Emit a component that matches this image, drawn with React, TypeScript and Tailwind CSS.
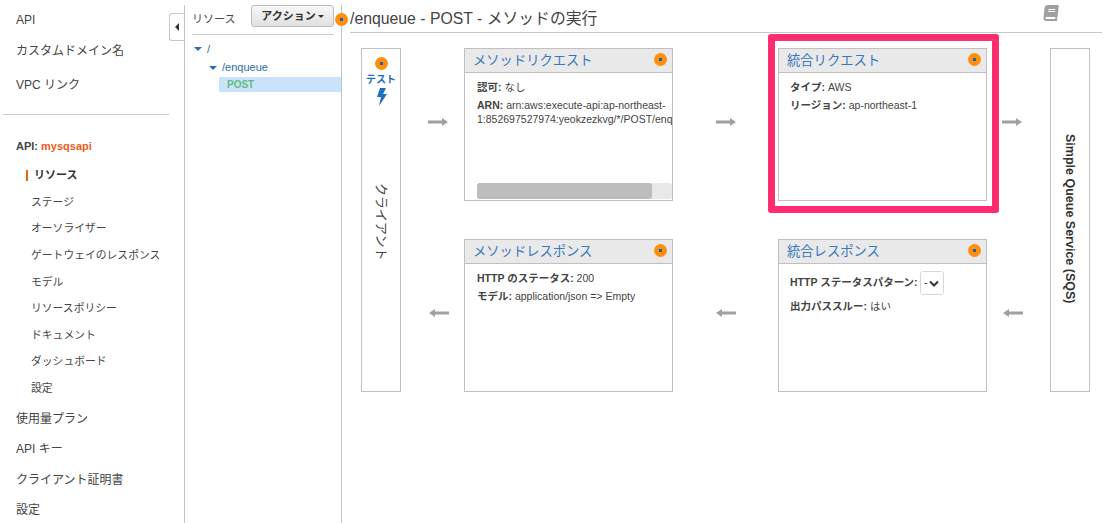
import { FaBook } from "react-icons/fa";

const font = "font-['Liberation_Sans','Noto_Sans_CJK_JP',sans-serif]";

function Dot({ className = "" }: { className?: string }) {
  return (
    <span className={`flex h-[13px] w-[13px] shrink-0 items-center justify-center rounded-full bg-[#ff8f0f] ${className}`}>
      <span className="h-[3px] w-[3px] bg-[#1d5fb0]" />
    </span>
  );
}

function Caret() {
  return <span className="h-0 w-0 border-x-[4px] border-t-[4px] border-x-transparent border-t-[#2a6ebb]" />;
}

function Arrow({ left = false }: { left?: boolean }) {
  return (
    <svg width="20" height="10" viewBox="0 0 20 10" className={left ? "rotate-180" : ""}>
      <path d="M0 3.5h14V1l6 4-6 4V6.5H0z" fill="#a0a0a0" />
    </svg>
  );
}

function Card({ title, children, className = "" }: { title: string; children?: React.ReactNode; className?: string }) {
  return (
    <div className={`relative flex h-[153px] w-[209px] flex-col border border-[#c0c0c0] bg-white ${className}`}>
      <div className="flex h-[24px] shrink-0 items-center justify-between border-b border-[#c0c0c0] bg-[#e9e9e9] pl-[8px] pr-[5px]">
        <span className="text-[13.3px] text-[#3a78bd]">{title}</span>
        <Dot className="mb-[2px]" />
      </div>
      {children}
    </div>
  );
}

const topItems = [
  { label: "API", cls: "h-[30px]" },
  { label: "カスタムドメイン名", cls: "h-[30px] mt-[1px]" },
  { label: "VPC リンク", cls: "h-[30px] mt-[4px]" },
];
const apiItems = ["ステージ", "オーソライザー", "ゲートウェイのレスポンス", "モデル", "リソースポリシー", "ドキュメント", "ダッシュボード", "設定"];
const bottomItems = ["使用量プラン", "API キー", "クライアント証明書", "設定"];

export default function App() {
  return (
    <div className={`flex h-[523px] w-[1106px] overflow-hidden bg-white pt-[5px] text-[#444] ${font}`}>
      {/* left nav */}
      <div className="relative w-[185px] shrink-0 border-r border-[#c4c4c4]">
        {topItems.map((i) => (
          <div key={i.label} className={`flex items-center pl-[16px] text-[12px] text-[#444] ${i.cls}`}>{i.label}</div>
        ))}
        <div className="ml-[3px] mt-[14px] w-[166px] border-t border-[#c8c8c8]" />
        <div className="mt-[23px] flex h-[16px] items-center pl-[16px] text-[11px] font-bold">
          API:&nbsp;<span className="text-[#ec5c1c]">mysqsapi</span>
        </div>
        <div className="mt-[8px] flex h-[26.6px] items-center pl-[26px] text-[11px] font-bold text-[#333]">
          <span className="mr-[6px] h-[11px] w-[2px] bg-[#dd6b10]" />リソース
        </div>
        {apiItems.map((i) => (
          <div key={i} className="flex h-[26.6px] items-center pl-[31px] text-[10.8px]">{i}</div>
        ))}
        <div className="mt-[2px]">
          {bottomItems.map((i) => (
            <div key={i} className="flex h-[30.5px] items-center pl-[16px] text-[12px]">{i}</div>
          ))}
        </div>
        {/* collapse tab */}
        <div className="absolute right-0 top-[8px] flex h-[28px] w-[15px] items-center justify-center rounded-l-[3px] border border-r-0 border-[#c8c8c8] bg-white">
          <span className="h-0 w-0 border-y-[4px] border-r-[4px] border-y-transparent border-r-[#333]" />
        </div>
      </div>

      {/* resources panel */}
      <div className="relative w-[157px] shrink-0 border-r border-[#c4c4c4]">
        <div className="ml-[7px] mr-[7px] flex h-[30px] items-start justify-between border-b border-[#c8c8c8]">
          <span className="mt-[6px] text-[11px] text-[#444]">リソース</span>
          <button className="flex h-[22px] w-[83px] items-center justify-center gap-[2px] rounded-[3px] border border-[#bdbdbd] bg-linear-to-b from-[#f8f8f8] to-[#e0e0e0] text-[11px] font-bold text-[#333]">
            アクション
            <span className="h-0 w-0 border-x-[3px] border-t-[3px] border-x-transparent border-t-[#333]" />
          </button>
        </div>
        <div className="mt-[5px] text-[11px] text-[#2f6aa8]">
          <div className="flex h-[18px] items-center gap-[5px] pl-[9px]"><Caret /><span>/</span></div>
          <div className="flex h-[19px] items-center gap-[5px] pl-[24px]"><Caret /><span>/enqueue</span></div>
          <div className="ml-[34px] flex h-[15px] items-center bg-[#c9e3fb] pl-[8px] text-[10px] font-bold text-[#67bb7c]">POST</div>
        </div>
        <Dot className="absolute right-[-7px] top-[8px]" />
      </div>

      {/* method execution */}
      <div className="min-w-0 flex-1 pl-[8px] pr-[4px]">
        <div className="flex h-[28px] items-center justify-between border-b border-[#c8c8c8]">
          <span className="text-[15.8px] text-[#444]">/enqueue - POST - メソッドの実行</span>
          <FaBook className="mb-[11px] mr-[43px] h-[16px] w-[16px] -skew-x-6 text-[#a0a0a0]" />
        </div>

        <div className="ml-[11px] mt-[15px] grid grid-cols-[40px_63px_209px_105px_209px_63px_40px] grid-rows-[153px_38px_153px]">
          <div className="row-span-3 flex flex-col items-center border border-[#c0c0c0] pt-[8px]">
            <Dot />
            <span className="mt-[3px] text-[10px] font-bold leading-[14px] text-[#1f6fc0]">テスト</span>
            <svg width="11" height="18" viewBox="0 0 11 18" className="mt-[1px]">
              <path d="M4 0h6L7 6h4L3 18l2-9H1z" fill="#1f6fc0" />
            </svg>
            <div className="mt-[77px] text-[13px] text-[#444] [writing-mode:vertical-rl] [text-orientation:sideways]">クライアント</div>
          </div>

          <div className="flex items-center justify-center pb-[6px] pl-[11px]"><Arrow /></div>
          <Card title="メソッドリクエスト">
            <div className="relative min-h-0 flex-1 overflow-hidden pl-[12px] pt-[5px] text-[10.5px] whitespace-nowrap">
              <div className="h-[20px] leading-[18px]"><b>認可:</b> なし</div>
              <div className="leading-[14px]"><b>ARN:</b> arn:aws:execute-api:ap-northeast-</div>
              <div className="leading-[14px]">1:852697527974:yeokzezkvg/*/POST/enqueue</div>
              <div className="absolute bottom-[1px] left-[12px] right-0 h-[16px] rounded-[3px] bg-[#e8e8e8]">
                <div className="h-full w-[175px] rounded-[3px] bg-[#bdbdbd]" />
              </div>
            </div>
          </Card>
          <div className="flex items-center justify-center pb-[6px]"><Arrow /></div>
          <Card title="統合リクエスト">
            <div className="pl-[11px] pt-[5px] text-[10.5px]">
              <div className="h-[18px] leading-[18px]"><b>タイプ:</b> AWS</div>
              <div className="h-[18px] leading-[18px]"><b>リージョン:</b> ap-northeast-1</div>
            </div>
            {/* pink highlight */}
            <div className="pointer-events-none absolute bottom-[-13px] left-[-11px] right-[-13px] top-[-15px] rounded-[3px] border-[7px] border-[#ff2d6f]" />
          </Card>
          <div className="flex items-center justify-center pb-[6px] pr-[13px]"><Arrow /></div>
          <div className="row-span-3 flex items-center justify-center border border-[#c0c0c0] pb-[3px] text-[12.5px] font-bold text-[#333] [writing-mode:vertical-rl]">
            Simple Queue Service (SQS)
          </div>

          <div className="col-start-2 row-start-3 flex items-center justify-center pb-[6px] pl-[13px]"><Arrow left /></div>
          <Card title="メソッドレスポンス" className="col-start-3 row-start-3">
            <div className="pl-[12px] pt-[5px] text-[10.5px]">
              <div className="h-[18px] leading-[18px]"><b>HTTP のステータス:</b> 200</div>
              <div className="h-[18px] leading-[18px]"><b>モデル:</b> application/json =&gt; Empty</div>
            </div>
          </Card>
          <div className="col-start-4 row-start-3 flex items-center justify-center pb-[6px]"><Arrow left /></div>
          <Card title="統合レスポンス" className="col-start-5 row-start-3">
            <div className="pl-[11px] pt-[7px] text-[10.5px]">
              <div className="flex h-[24px] items-center">
                <b>HTTP ステータスパターン:</b>
                <span className="ml-[2px] flex h-[24px] w-[24px] items-center justify-center gap-[2px] rounded-[3px] border border-[#d8d8d8] text-[#333]">
                  -
                  <svg width="10" height="7" viewBox="0 0 10 7"><path d="M1 1.5l4 4 4-4" fill="none" stroke="#333" strokeWidth="2" /></svg>
                </span>
              </div>
              <div className="mt-[2px] h-[18px] leading-[18px]"><b>出力パススルー:</b> はい</div>
            </div>
          </Card>
          <div className="col-start-6 row-start-3 flex items-center justify-center pb-[6px] pr-[11px]"><Arrow left /></div>
        </div>
      </div>
    </div>
  );
}
